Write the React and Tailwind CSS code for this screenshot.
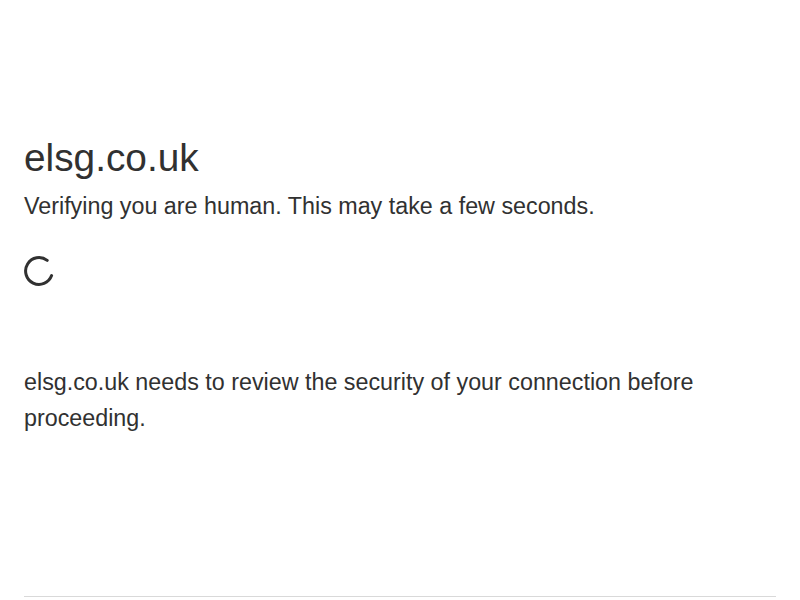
// App.jsx
const Spinner = () => (
    <svg width="30" height="30" viewBox="0 0 30 30" className="block">
        <path
            d="M27.6 19.6 A13.4 13.4 0 1 1 23.2 4.4"
            fill="none"
            stroke="#313131"
            strokeWidth="3"
            strokeLinecap="round"
        />
    </svg>
);

const App = () => {
    return (
        <div className="min-h-screen flex flex-col bg-white text-[#313131] font-['Liberation_Sans',Arial,sans-serif]">
            {/* Main */}
            <div className="flex-1 flex flex-col items-center">
                <div className="w-full max-w-[60rem] mx-auto mt-32 mb-[160px] px-6">
                    <h1 className="text-[38.8px] leading-[60px] font-normal">elsg.co.uk</h1>
                    <h2 className="text-[23.3px] leading-[36px] font-normal">
                        Verifying you are human. This may take a few seconds.
                    </h2>
                    <div className="my-8 h-[36px]">
                        <Spinner />
                    </div>
                    <div className="mt-[4.5rem] text-[23.3px] leading-[36px]">
                        elsg.co.uk needs to review the security of your connection before proceeding.
                    </div>
                </div>
            </div>

            {/* Footer */}
            <div className="w-full max-w-[60rem] mx-auto px-6 text-xs leading-[18px]">
                <div className="border-t border-[#d9d9d9] pt-4 pb-4" />
            </div>
        </div>
    );
};

export default App;
